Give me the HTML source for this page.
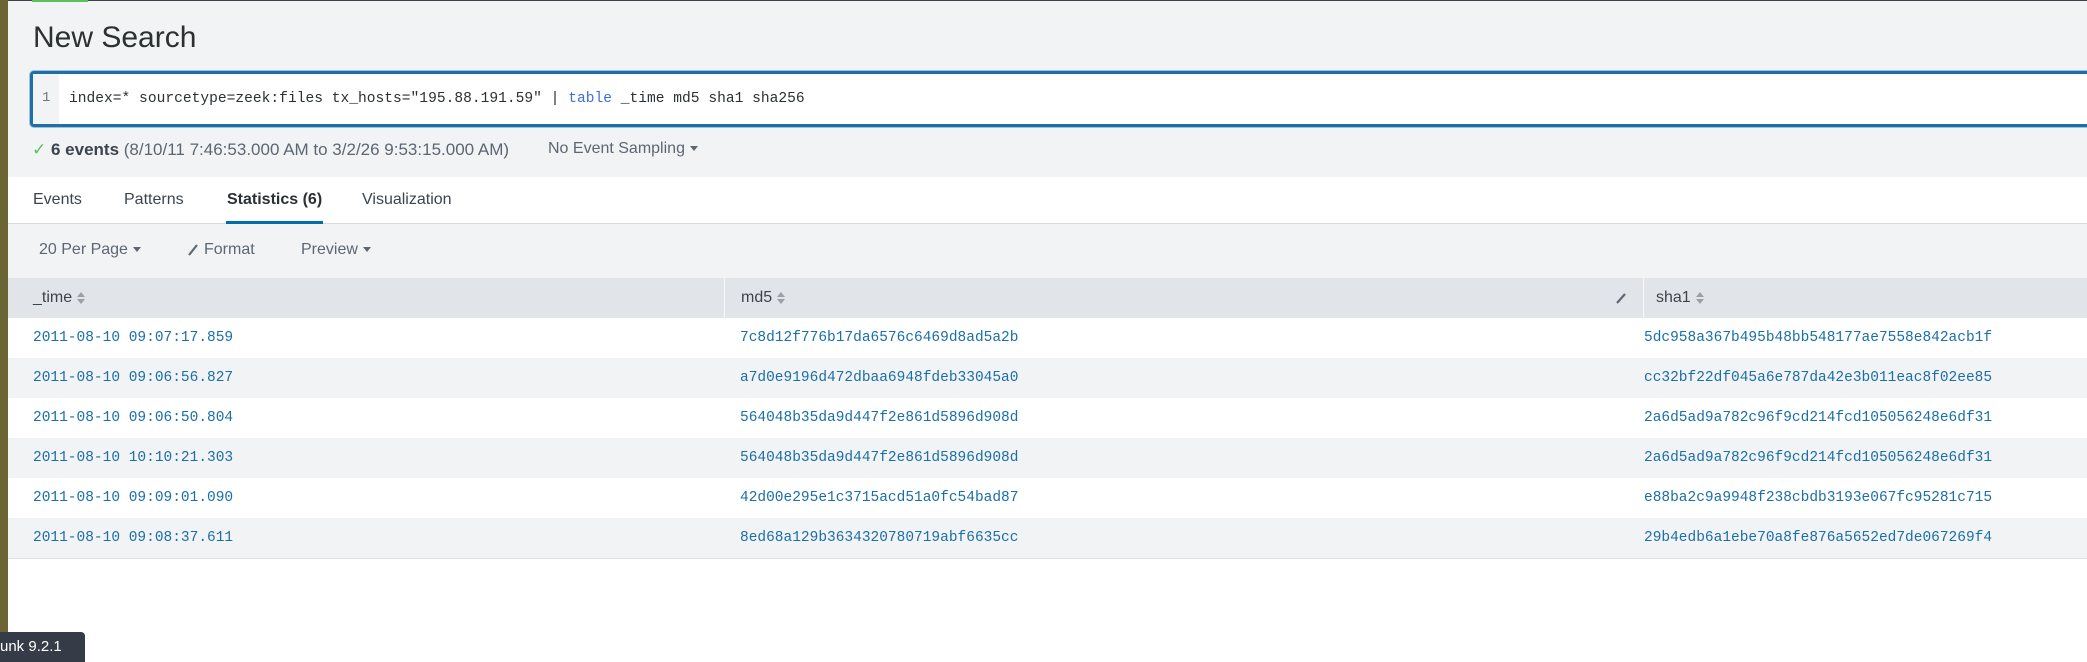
<!DOCTYPE html>
<html><head><meta charset="utf-8"><style>
*{margin:0;padding:0;box-sizing:border-box}
body{width:2087px;height:653px;overflow:hidden;background:#fff;font-family:"Liberation Sans",sans-serif;position:relative;color:#3c444d}
.abs{position:absolute}
.mono{font-family:"Liberation Mono",monospace}
.sort{display:inline-block;width:8px;height:12px;vertical-align:middle;margin-left:5px;position:relative}
.sort:before{content:"";position:absolute;left:0;top:0;border-left:4px solid transparent;border-right:4px solid transparent;border-bottom:5px solid #9aa0a8}
.sort:after{content:"";position:absolute;left:0;top:7px;border-left:4px solid transparent;border-right:4px solid transparent;border-top:5px solid #9aa0a8}
.row{position:absolute;left:8px;right:0;height:40px;font-family:"Liberation Mono",monospace;font-size:14.5px;color:#1a6fa8;line-height:40px}
.row span{position:absolute}
.caret{display:inline-block;border-left:4px solid transparent;border-right:4px solid transparent;border-top:5px solid #5c6773;vertical-align:middle;margin-left:5px}
</style></head><body>
<div class="abs" style="left:0;top:0;width:2087px;height:177px;background:#f2f3f5"></div>
<div class="abs" style="left:0;top:0;width:2087px;height:1px;background:#3c444d"></div>
<div class="abs" style="left:32px;top:0;width:56px;height:2px;background:#5cc05c"></div>
<div class="abs" style="left:33px;top:21px;font-size:30px;color:#2b3033">New Search</div>
<div class="abs" style="left:30px;top:71px;width:2070px;height:56px;border:3px solid #1f6fa6;border-radius:4px;background:#fff;box-shadow:0 0 0 1px #9cc3de"></div>
<div class="abs" style="left:33px;top:74px;width:26px;height:50px;background:#f2f3f5"></div>
<div class="abs mono" style="left:42px;top:90px;font-size:14px;color:#777">1</div>
<div class="abs mono" style="left:69px;top:91px;font-size:14.6px;color:#2b3033;white-space:pre">index=* sourcetype=zeek:files tx_hosts="195.88.191.59" | <span style="color:#3b6fe0">table</span> _time md5 sha1 sha256</div>
<div class="abs" style="left:32px;top:140px;font-size:17px;color:#5c6773;white-space:pre"><span style="color:#5cc05c">✓</span> <b style="color:#3c444d">6 events</b> (8/10/11 7:46:53.000 AM to 3/2/26 9:53:15.000 AM)</div>
<div class="abs" style="left:548px;top:140px;font-size:16px;color:#5c6773">No Event Sampling<span class="caret"></span></div>
<div class="abs" style="left:0;top:223px;width:2087px;height:1px;background:#d6dbe0"></div>
<div class="abs" style="left:33px;top:191px;font-size:16px;color:#3c444d">Events</div>
<div class="abs" style="left:124px;top:191px;font-size:16px;color:#3c444d">Patterns</div>
<div class="abs" style="left:227px;top:191px;font-size:16px;color:#2b3033;font-weight:bold">Statistics (6)</div>
<div class="abs" style="left:362px;top:191px;font-size:16px;color:#3c444d">Visualization</div>
<div class="abs" style="left:226px;top:221px;width:97px;height:3px;background:#006eaa"></div>
<div class="abs" style="left:0;top:224px;width:2087px;height:54px;background:#f2f3f5"></div>
<div class="abs" style="left:39px;top:241px;font-size:16px;color:#5c6773">20 Per Page<span class="caret"></span></div>
<svg class="abs" style="left:187px;top:243px" width="12" height="14"><path d="M2 12 L10 2" stroke="#5c6773" stroke-width="2.2"/></svg>
<div class="abs" style="left:204px;top:241px;font-size:16px;color:#5c6773">Format</div>
<div class="abs" style="left:301px;top:241px;font-size:16px;color:#5c6773">Preview<span class="caret"></span></div>
<div class="abs" style="left:0;top:278px;width:2087px;height:40px;background:#e1e5ea"></div>
<div class="abs" style="left:724px;top:278px;width:1px;height:40px;background:#f7f8fa"></div>
<div class="abs" style="left:1643px;top:278px;width:1px;height:40px;background:#f7f8fa"></div>
<div class="abs" style="left:33px;top:289px;font-size:16px;color:#3c444d">_time<span class="sort"></span></div>
<div class="abs" style="left:741px;top:289px;font-size:16px;color:#3c444d">md5<span class="sort"></span></div>
<svg class="abs" style="left:1615px;top:291px" width="12" height="14"><path d="M2 12 L10 3" stroke="#5c6773" stroke-width="2.2"/></svg>
<div class="abs" style="left:1656px;top:289px;font-size:16px;color:#3c444d">sha1<span class="sort"></span></div>

<div class="row" style="top:318px;background:#fff"><span style="left:25px">2011-08-10 09:07:17.859</span><span style="left:732px">7c8d12f776b17da6576c6469d8ad5a2b</span><span style="left:1636px">5dc958a367b495b48bb548177ae7558e842acb1f</span></div>
<div class="row" style="top:358px;background:#f2f3f5"><span style="left:25px">2011-08-10 09:06:56.827</span><span style="left:732px">a7d0e9196d472dbaa6948fdeb33045a0</span><span style="left:1636px">cc32bf22df045a6e787da42e3b011eac8f02ee85</span></div>
<div class="row" style="top:398px;background:#fff"><span style="left:25px">2011-08-10 09:06:50.804</span><span style="left:732px">564048b35da9d447f2e861d5896d908d</span><span style="left:1636px">2a6d5ad9a782c96f9cd214fcd105056248e6df31</span></div>
<div class="row" style="top:438px;background:#f2f3f5"><span style="left:25px">2011-08-10 10:10:21.303</span><span style="left:732px">564048b35da9d447f2e861d5896d908d</span><span style="left:1636px">2a6d5ad9a782c96f9cd214fcd105056248e6df31</span></div>
<div class="row" style="top:478px;background:#fff"><span style="left:25px">2011-08-10 09:09:01.090</span><span style="left:732px">42d00e295e1c3715acd51a0fc54bad87</span><span style="left:1636px">e88ba2c9a9948f238cbdb3193e067fc95281c715</span></div>
<div class="row" style="top:518px;background:#f2f3f5"><span style="left:25px">2011-08-10 09:08:37.611</span><span style="left:732px">8ed68a129b3634320780719abf6635cc</span><span style="left:1636px">29b4edb6a1ebe70a8fe876a5652ed7de067269f4</span></div>
<div class="abs" style="left:8px;top:558px;width:2079px;height:1px;background:#e1e5ea"></div>

<div class="abs" style="left:0;top:0;width:8px;height:653px;background:#6b6433"></div>
<div class="abs" style="left:0;top:632px;width:85px;height:30px;background:#363b48;border-radius:0 4px 0 0;color:#fff;font-size:15px;padding:6px 0 0 0;white-space:nowrap;overflow:hidden">unk 9.2.1</div>
</body></html>
